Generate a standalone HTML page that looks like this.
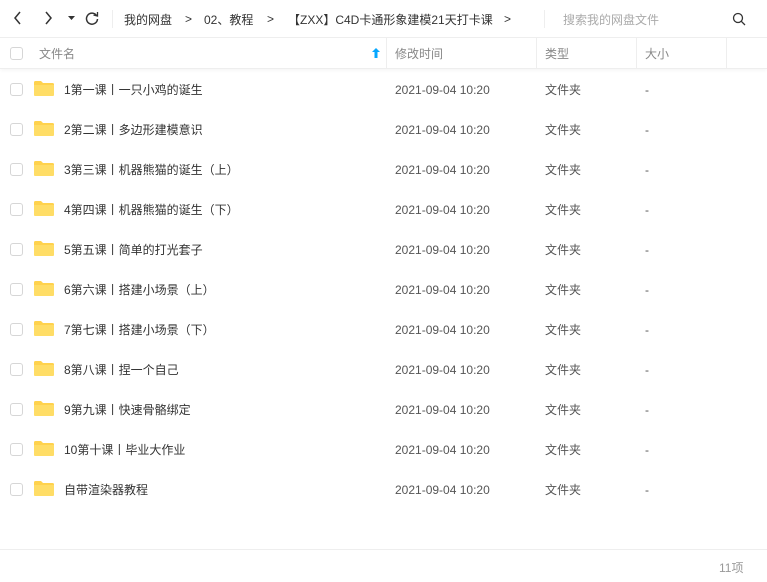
<!DOCTYPE html>
<html><head><meta charset="utf-8"><style>
*{margin:0;padding:0;box-sizing:border-box}
body{width:767px;height:582px;background:#fff;font-family:"Liberation Sans","Noto Sans CJK SC",sans-serif;font-size:12px;color:#333;position:relative;overflow:hidden}
.top{position:absolute;left:0;top:0;width:767px;height:38px;border-bottom:1px solid #eee}
.abs{position:absolute;white-space:nowrap}
.hdr{position:absolute;top:38px;left:0;width:767px;height:31px;border-bottom:1px solid #eee;box-shadow:0 2px 3px rgba(0,0,0,.03);color:#888}
.sep{position:absolute;top:0;width:1px;height:31px;background:#eee}
.row{position:absolute;left:0;width:767px;height:40px}
.cb{position:absolute;left:10px;width:13px;height:13px;border:1px solid #d6d6d6;border-radius:3px;background:#fff}
.fd{position:absolute;left:34px;width:20px;height:15px}
.t{position:absolute;top:0;line-height:40px;white-space:nowrap}
</style></head><body>
<div class="top">
<svg class="abs" style="left:12px;top:10px" width="12" height="16"><path d="M8 2 L3 8 L8 14" stroke="#333" stroke-width="1.5" fill="none"/></svg>
<svg class="abs" style="left:42px;top:10px" width="12" height="16"><path d="M4 2 L9 8 L4 14" stroke="#333" stroke-width="1.5" fill="none"/></svg>
<svg class="abs" style="left:68px;top:16px" width="8" height="6"><path d="M0 0 L7 0 L3.5 4z" fill="#333"/></svg>
<svg class="abs" style="left:84px;top:10px" width="16" height="16"><path d="M12.5 5.5 A5.5 5.5 0 1 0 13.5 9" stroke="#333" stroke-width="1.5" fill="none"/><path d="M9.5 5 L13.5 6 L13.5 2" stroke="#333" stroke-width="1.3" fill="none"/></svg>
<div class="abs" style="left:112px;top:10px;width:1px;height:18px;background:#eee"></div>
<div class="abs" style="left:124px;top:11px">我的网盘</div>
<div class="abs" style="left:185px;top:12px">&gt;</div>
<div class="abs" style="left:204px;top:11px">02、教程</div>
<div class="abs" style="left:267px;top:12px">&gt;</div>
<div class="abs" style="left:288px;top:11px">【ZXX】C4D卡通形象建模21天打卡课</div>
<div class="abs" style="left:504px;top:12px">&gt;</div>
<div class="abs" style="left:544px;top:10px;width:1px;height:18px;background:#eee"></div>
<div class="abs" style="left:563px;top:11px;color:#aaa">搜索我的网盘文件</div>
<svg class="abs" style="left:732px;top:12px" width="14" height="14"><circle cx="6" cy="6" r="4.5" stroke="#333" stroke-width="1.3" fill="none"/><path d="M9.3 9.3 L13 13" stroke="#333" stroke-width="1.3"/></svg>
</div>
<div class="hdr">
<div class="cb" style="top:9px"></div>
<div class="abs" style="left:39px;top:7px">文件名</div>
<svg class="abs" style="left:371px;top:9px" width="10" height="12"><path d="M5 1 L1 5 H3.5 V11 H6.5 V5 H9z" fill="#06a7ff"/></svg>
<div class="sep" style="left:386px"></div>
<div class="abs" style="left:395px;top:7px">修改时间</div>
<div class="sep" style="left:536px"></div>
<div class="abs" style="left:545px;top:7px">类型</div>
<div class="sep" style="left:636px"></div>
<div class="abs" style="left:645px;top:7px">大小</div>
<div class="sep" style="left:726px"></div>
</div>
<div id="rows"></div>
<div class="abs" style="left:0;top:549px;width:767px;height:1px;background:#eee"></div>
<div class="abs" style="left:719px;top:559px;color:#999">11项</div>
<script>
var n=["1第一课丨一只小鸡的诞生","2第二课丨多边形建模意识","3第三课丨机器熊猫的诞生（上）","4第四课丨机器熊猫的诞生（下）","5第五课丨简单的打光套子","6第六课丨搭建小场景（上）","7第七课丨搭建小场景（下）","8第八课丨捏一个自己","9第九课丨快速骨骼绑定","10第十课丨毕业大作业","自带渲染器教程"];
var h="";n.forEach(function(s,i){var y=70+i*40;h+='<div class="row" style="top:'+y+'px"><div class="cb" style="top:13px"></div><svg class="fd" style="top:11px" viewBox="0 0 20 15"><path d="M0 1.5 Q0 0 1.5 0 H7 L9 2 H18.5 Q20 2 20 3.5 V13.5 Q20 15 18.5 15 H1.5 Q0 15 0 13.5z" fill="#ffd24d"/><path d="M0 4 H20 V13.5 Q20 15 18.5 15 H1.5 Q0 15 0 13.5z" fill="#ffdd66"/></svg><div class="t" style="left:64px;color:#333">'+s+'</div><div class="t" style="left:395px;color:#555">2021-09-04 10:20</div><div class="t" style="left:545px;color:#555">文件夹</div><div class="t" style="left:645px;color:#555">-</div></div>'});
document.getElementById("rows").innerHTML=h;
</script>
</body></html>
